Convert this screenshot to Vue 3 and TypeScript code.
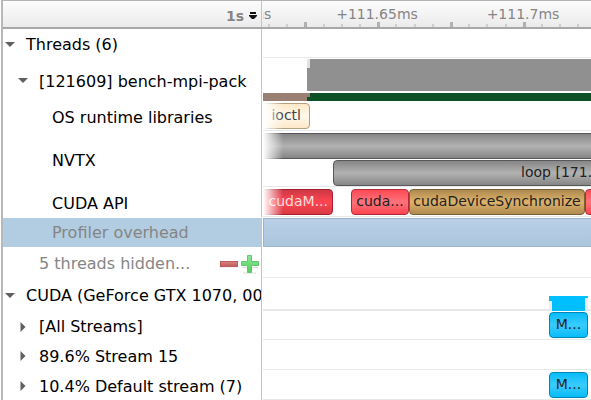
<script setup lang="ts">
import { reactive } from 'vue'

interface Bar {
  text?: string
  start: number
  length: number
  tone: string
  lane?: number
  fade?: boolean
  align?: string
}
interface Block {
  start: number
  length: number
  top: number
  height: number
  color: string
}
interface Row {
  id: string
  label: string
  depth: number
  kind: string
  open?: boolean
  muted?: boolean
  selected?: boolean
  counter?: boolean
  bars?: Bar[]
  blocks?: Block[]
}

const rows = reactive<Row[]>([
  { id: 'threads', label: 'Threads (6)', depth: 0, kind: 'group', open: true },
  {
    id: 'process',
    label: '[121609] bench-mpi-pack',
    depth: 1,
    kind: 'process',
    open: true,
    blocks: [
      { start: 44, length: 400, top: 1, height: 32, color: '#909090' },
      { start: 44, length: 3, top: 1, height: 9, color: '#e2e2e2' },
      { start: 0, length: 47, top: 35, height: 8, color: '#9a8072' },
      { start: 47, length: 400, top: 35, height: 8, color: '#0d5126' },
      { start: 44, length: 3, top: 39, height: 4, color: '#0d5126' },
    ],
  },
  {
    id: 'os',
    label: 'OS runtime libraries',
    depth: 2,
    kind: 'os',
    bars: [{ text: 'ioctl', start: -30, length: 77, tone: 'cream', fade: true, align: 'end' }],
  },
  {
    id: 'nvtx',
    label: 'NVTX',
    depth: 2,
    kind: 'nvtx',
    bars: [
      { start: -30, length: 500, tone: 'grey', fade: true },
      { text: 'loop [171.234 µs]', start: 70, length: 500, tone: 'grey', lane: 1 },
    ],
  },
  {
    id: 'api',
    label: 'CUDA API',
    depth: 2,
    kind: 'api',
    bars: [
      { text: 'cudaM...', start: -30, length: 100, tone: 'crimson', fade: true, align: 'end' },
      { text: 'cuda...', start: 88, length: 58, tone: 'red' },
      { text: 'cudaDeviceSynchronize', start: 146, length: 176, tone: 'tan' },
      { start: 322, length: 60, tone: 'red' },
    ],
  },
  { id: 'overhead', label: 'Profiler overhead', depth: 2, kind: 'overhead', muted: true, selected: true },
  { id: 'hidden', label: '5 threads hidden...', depth: 1, kind: 'hidden', muted: true, counter: true },
  {
    id: 'cuda',
    label: 'CUDA (GeForce GTX 1070, 0000:01:00.0)',
    depth: 0,
    kind: 'device',
    open: true,
    blocks: [
      { start: 286, length: 39, top: 18, height: 13, color: '#eeeeee' },
      { start: 286, length: 39, top: 18, height: 2, color: '#00bfff' },
      { start: 286, length: 3, top: 18, height: 5, color: '#00bfff' },
      { start: 289, length: 33, top: 18, height: 15, color: '#00bfff' },
    ],
  },
  {
    id: 'all',
    label: '[All Streams]',
    depth: 1,
    kind: 'stream first',
    open: false,
    bars: [{ text: 'M...', start: 286, length: 39, tone: 'cyan' }],
  },
  { id: 's15', label: '89.6% Stream 15', depth: 1, kind: 'stream', open: false },
  {
    id: 's7',
    label: '10.4% Default stream (7)',
    depth: 1,
    kind: 'stream',
    open: false,
    bars: [{ text: 'M...', start: 286, length: 39, tone: 'cyan' }],
  },
])

const ticks = Array.from({ length: 60 }, (_, i) => ({
  x: Math.round(5 + i * 18.2),
  major: i % 4 === 2,
}))
const marks = [
  { at: -28, text: '+111.6ms' },
  { at: 114, text: '+111.65ms' },
  { at: 260, text: '+111.7ms' },
]

function toggle(row: Row) {
  row.open = !row.open
}
</script>

<template>
  <main class="profiler">
    <header class="head">
      <div class="unit">
        <button type="button" class="unit-button" aria-label="Time base 1s">
          <span>1s</span>
          <svg width="8" height="8" viewBox="0 0 8 8" aria-hidden="true">
            <path d="M1 0h6v2H1zM0 3h8v1L5 7H3L0 4z" fill="#111" />
          </svg>
        </button>
      </div>
      <div class="ruler">
        <span v-for="m in marks" :key="m.text" class="mark" :style="{ left: m.at + 'px' }">{{ m.text }}</span>
        <svg class="ticks" width="100%" height="5" aria-hidden="true">
          <rect
            v-for="t in ticks"
            :key="t.x"
            :x="t.x"
            :y="t.major ? 0 : 2"
            :width="t.major ? 3 : 2"
            height="5"
            :fill="t.major ? '#b0b0b0' : '#cecece'"
          />
        </svg>
      </div>
    </header>

    <section v-for="row in rows" :key="row.id" class="row" :class="[row.kind, { selected: row.selected }]">
      <div class="label" :class="['depth-' + row.depth, { muted: row.muted }]">
        <button
          v-if="row.open !== undefined"
          type="button"
          class="caret"
          :aria-label="'Toggle ' + row.label"
          :aria-expanded="row.open"
          @click="toggle(row)"
        >
          <svg width="10" height="10" viewBox="0 0 10 10" aria-hidden="true">
            <path :d="row.open ? 'M0 2h10L5 7z' : 'M2.5 0v10L7.5 5z'" fill="#606060" />
          </svg>
        </button>
        <span v-else class="caret"></span>
        <span class="name">{{ row.label }}</span>
        <span v-if="row.counter" class="counter">
          <button type="button" aria-label="Show fewer threads">
            <svg width="20" height="20" viewBox="0 0 20 20" aria-hidden="true">
              <defs>
                <linearGradient id="minus" x1="0" y1="0" x2="0" y2="1">
                  <stop offset="0" stop-color="#d98585" />
                  <stop offset="1" stop-color="#c05a5a" />
                </linearGradient>
              </defs>
              <path d="M0 13h18" stroke="#e4e4e4" />
              <rect x="1.5" y="7.5" width="17" height="5" fill="url(#minus)" stroke="#bd5f5f" />
            </svg>
          </button>
          <button type="button" aria-label="Show more threads">
            <svg width="20" height="20" viewBox="0 0 20 20" aria-hidden="true">
              <defs>
                <linearGradient id="plus" x1="0" y1="0" x2="0" y2="1">
                  <stop offset="0" stop-color="#90e898" />
                  <stop offset="1" stop-color="#50cc5c" />
                </linearGradient>
              </defs>
              <path d="M3 19h13M2 13.5h16" stroke="#dedede" />
              <path
                d="M7.5 1.5h4v6h7v4h-7v7h-4v-7h-6v-4h6z"
                fill="url(#plus)"
                stroke="#5fc768"
              />
            </svg>
          </button>
        </span>
      </div>
      <div class="track">
        <div
          v-for="(b, i) in row.blocks"
          :key="'k' + i"
          class="block"
          :style="{
            left: b.start + 'px',
            width: b.length + 'px',
            top: b.top + 'px',
            height: b.height + 'px',
            background: b.color,
          }"
        ></div>
        <div
          v-for="(b, i) in row.bars"
          :key="i"
          class="bar"
          :class="[b.tone, { second: b.lane === 1, end: b.align === 'end' }]"
          :style="{ left: b.start + 'px', width: b.length + 'px' }"
        >
          {{ b.text }}
        </div>
        <div v-if="row.bars?.some((b) => b.fade)" class="fade"></div>
      </div>
    </section>
  </main>
</template>

<style>
body {
  margin: 0;
  background: #fff;
  overflow: hidden;
}
</style>

<style scoped>
.profiler {
  box-sizing: border-box;
  border-top: 1px solid #b4b4b4;
  border-left: 2px solid #b8b8b8;
  margin-left: 1px;
  font-family: 'DejaVu Sans', sans-serif;
  font-size: 16px;
  color: #000;
}
.head,
.row {
  display: grid;
  grid-template-columns: 260px minmax(0, 1fr);
}
.head {
  box-sizing: border-box;
  height: 28px;
  border-bottom: 2px solid #a8a8a8;
  background: linear-gradient(#fcfcfc, #ebebeb);
  color: #858585;
}
.unit,
.label {
  box-sizing: border-box;
  margin-right: 1px;
  border-right: 1px solid #c4c4c4;
}
.unit {
  display: flex;
  justify-content: flex-end;
  padding-right: 4px;
}
button {
  margin: 0;
  padding: 0;
  border: 0;
  background: none;
  font: inherit;
  color: inherit;
}
.unit-button {
  display: flex;
  align-items: center;
  gap: 5px;
  padding-top: 4px;
  font-size: 14px;
  font-weight: bold;
}
.ruler {
  position: relative;
  overflow: hidden;
  font-size: 14px;
}
.mark {
  position: absolute;
  top: 5px;
  line-height: 17px;
  transform: translateX(-50%);
  white-space: nowrap;
}
.ticks {
  position: absolute;
  left: 0;
  bottom: 0;
}
.row {
  height: 30px;
}
.label {
  display: flex;
  align-items: center;
  gap: 11px;
  padding-top: 2px;
  padding-left: 2px;
  overflow: hidden;
  white-space: nowrap;
}
.depth-1 {
  padding-left: 15px;
}
.depth-2 {
  padding-left: 28px;
}
.muted {
  color: #858585;
}
.caret {
  flex: none;
  display: flex;
  width: 10px;
  height: 10px;
}
.counter {
  display: flex;
  flex: none;
  gap: 1px;
  margin-left: auto;
}
.counter svg {
  display: block;
}
.track {
  position: relative;
  box-sizing: border-box;
  overflow: hidden;
  border-bottom: 1px solid #e8e8e8;
}
.group,
.os,
.first {
  height: 29px;
}
.process {
  height: 44px;
}
.process .track {
  border-bottom: 0;
}
.nvtx {
  height: 56px;
}
.selected {
  box-sizing: border-box;
  padding-top: 1px;
}
.selected .label {
  padding-top: 0;
  background: #b2cde2;
}
.selected .track {
  border: 1px solid #9bb4c8;
  border-right: 0;
  background: linear-gradient(#bad0e8, #abc6dc);
}
.hidden {
  height: 31px;
}
.hidden .label {
  padding-right: 1px;
}
.device {
  height: 33px;
}
.device .track {
  border-bottom-width: 2px;
  overflow: visible;
}
.block {
  position: absolute;
}
.bar {
  position: absolute;
  top: 2px;
  box-sizing: border-box;
  height: 26px;
  border: 1px solid #555;
  border-radius: 4px;
  font-size: 14px;
  line-height: 23px;
  text-align: center;
  white-space: nowrap;
  color: #222;
}
.os .bar,
.first .bar {
  top: 1px;
}
.bar.end {
  padding-right: 4px;
  text-align: right;
}
.bar.second {
  top: 29px;
}
.cream {
  border-color: #b0a080;
  background: linear-gradient(#fde8c8, #fff8ec 50%, #fde8c8);
  color: #444;
}
.os .bar.end {
  padding-right: 8px;
}
.grey {
  border-color: #58585c;
  background: linear-gradient(#868686, #b2b2b2 50%, #868686);
}
.crimson {
  border-color: #a8202c;
  background: linear-gradient(#cc3844, #ff4551 50%, #d83a45);
  color: #ffdcdc;
}
.red {
  border-color: #b02c38;
  background: linear-gradient(#ff4a55, #ff747c 50%, #ff4550);
}
.tan {
  border-color: #7c6036;
  background: linear-gradient(#ae8a50, #deb26b 50%, #ae8a50);
}
.cyan {
  border-color: #0086b4;
  background: linear-gradient(#08bcfa, #38ccff 50%, #08bcfa);
}
.fade {
  position: absolute;
  top: 0;
  bottom: 0;
  left: 0;
  width: 20px;
  background: linear-gradient(90deg, #fff, rgba(255, 255, 255, 0));
}
</style>
